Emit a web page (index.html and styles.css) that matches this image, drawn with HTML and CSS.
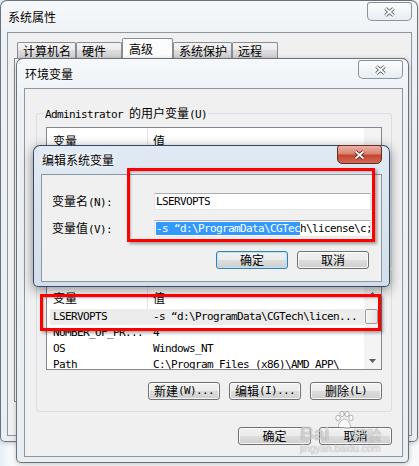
FILE: index.html
```html
<!DOCTYPE html>
<html lang="zh-CN">
<head>
<meta charset="utf-8">
<title>编辑系统变量</title>
<link rel="stylesheet" href="styles.css">
</head>
<body>
<div class="desktop">

  <section class="win win1">
    <div class="titlebar">
      <span class="title">系统属性</span>
      <span class="close"><svg width="13" height="10" viewBox="0 0 13 10"><path d="M2.5 1.5l8 7m0-7l-8 7" stroke="#4b5158" stroke-width="3.6" fill="none"/><path d="M2.5 1.5l8 7m0-7l-8 7" stroke="#fff" stroke-width="1.7" fill="none"/></svg></span>
    </div>
    <div class="client w1-client">
      <div class="tabs">
        <span class="tab">计算机名</span>
        <span class="tab">硬件</span>
        <span class="tab active">高级</span>
        <span class="tab">系统保护</span>
        <span class="tab">远程</span>
      </div>
      <div class="tabpage"></div>
    </div>
  </section>

  <section class="win win2">
    <div class="titlebar">
      <span class="title">环境变量</span>
      <span class="close"><svg width="13" height="10" viewBox="0 0 13 10"><path d="M2.5 1.5l8 7m0-7l-8 7" stroke="#4b5158" stroke-width="3.6" fill="none"/><path d="M2.5 1.5l8 7m0-7l-8 7" stroke="#fff" stroke-width="1.7" fill="none"/></svg></span>
    </div>
    <div class="client w2-client">
      <div class="group group-user">
        <span class="glabel"><span class="mono">Administrator </span>的用户变量<span class="mono">(U)</span></span>
        <div class="list list-user">
          <div class="list-main">
            <div class="lhead"><span class="c1">变量</span><span class="c2">值</span></div>
            <div class="lrow"><span class="c1 mono">TEMP</span><span class="c2 mono">%USERPROFILE%\AppData\Local\Temp</span></div>
            <div class="lrow"><span class="c1 mono">TMP</span><span class="c2 mono">%USERPROFILE%\AppData\Local\Temp</span></div>
          </div>
          <div class="vscroll blank"></div>
        </div>
        <div class="btnrow">
          <button class="btn">新建<span class="mono">(N)...</span></button>
          <button class="btn">编辑<span class="mono">(E)...</span></button>
          <button class="btn">删除<span class="mono">(D)</span></button>
        </div>
      </div>

      <div class="group group-sys">
        <span class="glabel">系统变量<span class="mono">(S)</span></span>
        <div class="list list-sys">
          <div class="list-main">
            <div class="lhead"><span class="c1">变量</span><span class="c2">值</span></div>
            <div class="lrow sel"><span class="c1 mono">LSERVOPTS</span><span class="c2 mono">-s “d:\ProgramData\CGTech\licen...</span></div>
            <div class="lrow"><span class="c1 mono">NUMBER_OF_PR...</span><span class="c2 mono">4</span></div>
            <div class="lrow"><span class="c1 mono">OS</span><span class="c2 mono">Windows_NT</span></div>
            <div class="lrow"><span class="c1 mono">Path</span><span class="c2 mono">C:\Program Files (x86)\AMD APP\</span></div>
          </div>
          <div class="vscroll">
            <span class="sb-btn"><svg width="7" height="4" viewBox="0 0 7 4"><path d="M0 4L3.5 0L7 4z" fill="#5a5a5a"/></svg></span>
            <span class="sb-thumb"></span>
            <span class="sb-track"></span>
            <span class="sb-btn"><svg width="7" height="4" viewBox="0 0 7 4"><path d="M0 0L7 0L3.5 4z" fill="#5a5a5a"/></svg></span>
          </div>
        </div>
        <div class="btnrow">
          <button class="btn">新建<span class="mono">(W)...</span></button>
          <button class="btn">编辑<span class="mono">(I)...</span></button>
          <button class="btn">删除<span class="mono">(L)</span></button>
        </div>
      </div>

      <div class="btnrow dlg-btns">
        <button class="btn">确定</button>
        <button class="btn">取消</button>
      </div>
    </div>
  </section>

  <section class="win win3">
    <div class="titlebar">
      <span class="title">编辑系统变量</span>
      <span class="close"><svg width="13" height="10" viewBox="0 0 13 10"><path d="M2.5 1.5l8 7m0-7l-8 7" stroke="#5a1f17" stroke-width="3.6" fill="none"/><path d="M2.5 1.5l8 7m0-7l-8 7" stroke="#fff" stroke-width="1.7" fill="none"/></svg></span>
    </div>
    <div class="client w3-client">
      <div class="frow">
        <span class="flabel">变量名<span class="mono">(N):</span></span>
        <span class="field mono">LSERVOPTS</span>
      </div>
      <div class="frow">
        <span class="flabel">变量值<span class="mono">(V):</span></span>
        <span class="field mono"><span class="hl">-s “d:\ProgramData\CGTec</span>h\license\c;</span>
      </div>
      <div class="btnrow">
        <button class="btn default">确定</button>
        <button class="btn">取消</button>
      </div>
    </div>
  </section>

  <div class="mark mark1"></div>
  <div class="mark mark2"></div>

  <div class="watermark">
    <div class="wm-top">
      <span class="wm-bai">Bai</span>
      <svg class="wm-paw" width="20" height="18" viewBox="0 0 20 18"><g fill="rgba(255,255,255,.6)" stroke="rgba(0,0,0,.25)" stroke-width="1"><ellipse cx="4" cy="7" rx="2.2" ry="2.8"/><ellipse cx="8" cy="3" rx="2.2" ry="2.6"/><ellipse cx="13" cy="3" rx="2.2" ry="2.6"/><ellipse cx="17" cy="7" rx="2.2" ry="2.8"/><path d="M10.5 8c3 0 6 5 6 7.5S14 18 10.5 17 5 18 4.5 15.5 7.5 8 10.5 8z"/></g></svg>
      <span class="wm-jy">经验</span>
    </div>
    <div class="wm-url">jingyan.baidu.com</div>
  </div>

</div>
</body>
</html>
```

FILE: styles.css
```css
* { box-sizing: border-box; margin: 0; padding: 0; }
html, body { width: 419px; height: 466px; overflow: hidden; }
body {
  background: #f7f9fb;
  font-family: "Noto Sans CJK SC", "Liberation Sans", sans-serif;
  font-size: 12px;
  line-height: 14px;
  color: #000;
}
.desktop {
  position: relative;
  width: 419px;
  height: 466px;
  background: linear-gradient(90deg, #e6eff5 0, #f7f9fb 10px);
}
.mono {
  font-family: "DejaVu Sans Mono", "Liberation Mono", monospace;
  font-size: 11px;
  letter-spacing: -0.62px;
}

/* windows */
.win {
  position: absolute;
  display: flex;
  flex-direction: column;
  border: 1px solid rgba(50, 60, 72, .7);
  border-radius: 7px 7px 5px 5px;
  background: linear-gradient(180deg, #f6f8fb 0, #edf1f5 40px, #e9eef3 100%);
  box-shadow: 0 1px 5px rgba(0, 0, 0, .22);
}
.win1 { left: 0; top: 0; width: 418px; height: 442px; padding: 0 5px 5px 6px; }
.win2 { left: 16px; top: 58px; width: 393px; height: 405px; padding: 0 5px 5px 7px; }
.win3 {
  left: 33px; top: 145px; width: 357px; height: 142px; padding: 0 7px 4px 7px;
  background: linear-gradient(180deg, #e1eaf4, #d2deeb);
  border-color: rgba(25, 45, 75, .85);
  box-shadow: 0 3px 12px rgba(0, 0, 0, .45);
}

.titlebar { display: flex; justify-content: space-between; align-items: center; flex: none; }
.win1 .titlebar { height: 31px; }
.win2 .titlebar { height: 29px; }
.win3 .titlebar { height: 28px; }
.title { margin-left: 1px; white-space: nowrap; text-shadow: 0 0 5px #fff, 0 0 8px #fff; }

.close {
  align-self: flex-start;
  margin-top: 1px;
  width: 45px;
  height: 19px;
  display: flex;
  align-items: center;
  justify-content: center;
  border: 1px solid rgba(70, 80, 92, .6);
  border-radius: 3px 3px 5px 5px;
  background: linear-gradient(#fbfcfd, #e9edf1);
}
.win3 .close {
  margin-top: -1px;
  border-color: #6b2b22;
  background: linear-gradient(#ebb3a5 0, #d98472 45%, #c5452f 55%, #d06a54 100%);
}

.client { flex: 1; min-height: 0; border: 1px solid #8d97a2; background: #f0f0f0; }

/* window 1 */
.w1-client { padding-top: 5px; }
.tabs { display: flex; align-items: flex-end; height: 20px; margin-left: 9px; }
.tab {
  height: 16px;
  min-width: 46px;
  padding: 0 4px 0 5px;
  border: 1px solid #898c95;
  border-bottom: none;
  border-radius: 2px 2px 0 0;
  background: linear-gradient(#f3f3f3, #ebebeb 50%, #dddddd 50%, #cfcfcf);
  line-height: 15px;
  white-space: nowrap;
}
.tab.active { height: 20px; min-width: 51px; padding-left: 6px; background: #fcfcfc; line-height: 19px; }
.tabpage { margin-left: 6px; width: 391px; height: 344px; border: 1px solid #898c95; background: #fcfcfc; }

/* window 2 */
.w2-client { padding: 24px 10px 0 11px; display: flex; flex-direction: column; }
.group {
  display: flex;
  flex-direction: column;
  border: 1px solid #d5dfe5;
  border-radius: 3px;
  padding: 0 9px 10px 9px;
}
.group-sys { margin-top: 2px; padding-bottom: 11px; }
.glabel {
  align-self: flex-start;
  margin: -8px 0 0 -2px;
  padding: 0 1px;
  height: 14px;
  line-height: 14px;
  background: #f0f0f0;
  white-space: nowrap;
}

.list { display: flex; margin-top: 7px; border: 1px solid #828790; background: #fff; overflow: hidden; }
.list-user { height: 100px; }
.list-sys { height: 86px; }
.list-main { flex: 1; min-width: 0; overflow: hidden; }
.lhead { display: flex; height: 24px; }
.lhead span { display: flex; align-items: center; padding-top: 2px; }
.lhead .c1 { width: 101px; padding-left: 6px; border-right: 1px solid #e5e5e5; }
.lhead .c2 { padding-left: 5px; }
.lrow { display: flex; height: 16px; line-height: 16px; margin-left: 3px; white-space: nowrap; }
.lrow .c1 { width: 97px; padding-left: 3px; overflow: hidden; flex: none; }
.lrow .c2 { padding-left: 6px; }
.lrow.sel { background: #ececec; }

.vscroll { flex: none; width: 17px; display: flex; flex-direction: column; background: #f4f4f4; }
.vscroll.blank { background: #f4f4f4; }
.sb-btn { height: 17px; flex: none; display: flex; align-items: center; justify-content: center; }
.sb-thumb {
  flex: none;
  margin: 7px 3px 0 1px;
  height: 15px;
  border: 1px solid #9b9b9b;
  border-radius: 2px;
  background: linear-gradient(90deg, #f6f6f6, #e2e2e2);
}
.sb-track { flex: 1; }

/* buttons */
.btnrow { display: flex; justify-content: flex-end; gap: 9px; margin-top: 12px; }
.btn {
  font: inherit;
  width: 72px;
  height: 18px;
  display: flex;
  align-items: center;
  justify-content: center;
  border: 1px solid #707070;
  border-radius: 3px;
  background: linear-gradient(#f2f2f2 0, #ebebeb 50%, #dddddd 50%, #cfcfcf 100%);
  box-shadow: inset 0 0 0 1px rgba(255, 255, 255, .8);
  color: #000;
  line-height: 14px;
  white-space: nowrap;
}
.btn.default { border-color: #3c7fb1; box-shadow: inset 0 0 0 1px #b5e3f8; }
.dlg-btns { margin-top: 15px; gap: 8px; }
.dlg-btns .btn { width: 73px; }

/* window 3 */
.w3-client { padding: 18px 10px 0 10px; display: flex; flex-direction: column; }
.frow { display: flex; align-items: center; height: 17px; }
.frow + .frow { margin-top: 10px; }
.flabel { width: 102px; white-space: nowrap; }
.field {
  width: 217px;
  height: 17px;
  border: 1px solid;
  border-color: #abadb3 #dbdfe6 #e3e9ef #e2e3ea;
  background: #fff;
  padding-left: 1px;
  line-height: 15px;
  overflow: hidden;
  white-space: nowrap;
}
.hl { background: #3399ff; color: #fff; }
.w3-client .btnrow { margin-top: 14px; padding-right: 2px; }

/* red annotation boxes */
.mark {
  position: absolute;
  border: 3px solid #ff0000;
  box-shadow: 2px 2px 3px rgba(0, 0, 0, .35), inset 1px 1px 2px rgba(0, 0, 0, .25);
}
.mark1 { left: 127px; top: 168px; width: 248px; height: 74px; }
.mark2 { left: 40px; top: 294px; width: 341px; height: 37px; }

/* watermark */
.watermark { position: absolute; left: 300px; top: 411px; width: 100px; color: rgba(255, 255, 255, .6); }
.wm-top { display: flex; align-items: flex-end; height: 32px; }
.wm-bai {
  font-family: "Liberation Sans", sans-serif;
  font-weight: bold;
  font-size: 19px;
  line-height: 19px;
  text-shadow: 0 0 1px rgba(0, 0, 0, .45);
}
.wm-paw { align-self: flex-start; margin-left: 4px; }
.wm-jy { margin-left: -2px; font-size: 15px; line-height: 17px; text-shadow: 0 0 1px rgba(0, 0, 0, .45); }
.wm-url {
  margin-top: 1px;
  font-family: "Liberation Sans", sans-serif;
  font-size: 10px;
  line-height: 10px;
  color: rgba(255, 255, 255, .55);
  text-shadow: 0 0 1px rgba(0, 0, 0, .35);
}
```
